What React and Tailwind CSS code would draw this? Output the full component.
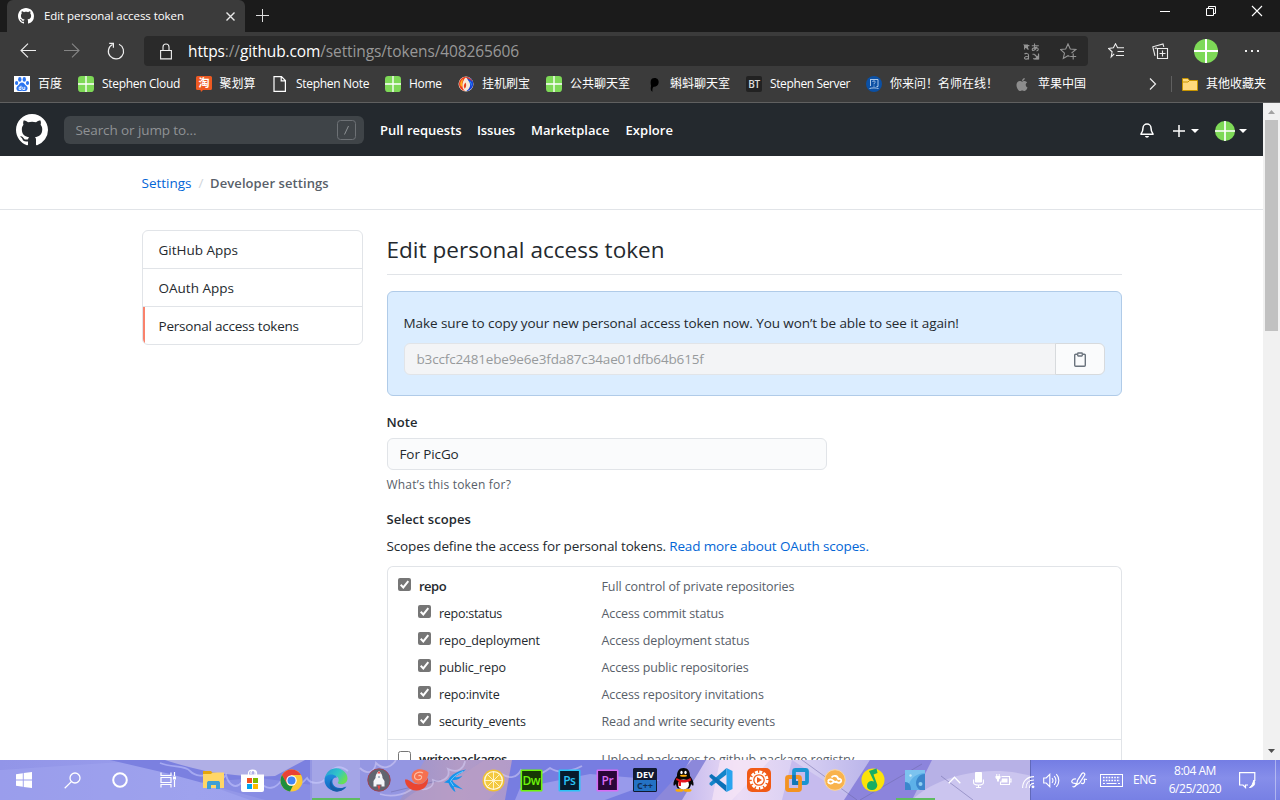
import React from "react";
import { FaApple } from "react-icons/fa";

const MARK =
  "M8 0C3.58 0 0 3.58 0 8c0 3.54 2.29 6.53 5.47 7.59.4.07.55-.17.55-.38 0-.19-.01-.82-.01-1.49-2.01.37-2.53-.49-2.69-.94-.09-.23-.48-.94-.82-1.13-.28-.15-.68-.52-.01-.53.63-.01 1.08.58 1.23.82.72 1.21 1.87.87 2.33.66.07-.52.28-.87.51-1.07-1.78-.2-3.64-.89-3.64-3.95 0-.87.31-1.59.82-2.15-.08-.2-.36-1.02.08-2.12 0 0 .67-.21 2.2.82.64-.18 1.32-.27 2-.27.68 0 1.36.09 2 .27 1.53-1.04 2.2-.82 2.2-.82.44 1.1.16 1.92.08 2.12.51.56.82 1.27.82 2.15 0 3.07-1.87 3.75-3.65 3.95.29.25.54.73.54 1.48 0 1.07-.01 1.93-.01 2.2 0 .21.15.46.55.38A8.013 8.013 0 0016 8c0-4.42-3.58-8-8-8z";

function Svg({ w = 16, h = w, vb, className = "", children }) {
  return (
    <svg width={w} height={h} viewBox={vb || `0 0 ${w} ${h}`} fill="none" className={`block shrink-0 ${className}`}>
      {children}
    </svg>
  );
}

function GitHubMark({ size }) {
  return (
    <Svg w={size} vb="0 0 16 16">
      <path d={MARK} fill="#fff" />
    </Svg>
  );
}

function GreenCross({ size, rx }) {
  return (
    <Svg w={size} vb="0 0 24 24">
      <rect width="24" height="24" rx={rx} fill="#7ed957" />
      <path d="M12 0v24M0 12h24" stroke="#fff" strokeWidth="2" />
    </Svg>
  );
}

/* ---------- browser chrome ---------- */

function TitleBar() {
  return (
    <div className="flex h-8 bg-[#1b1b1b] pl-[7px]">
      <div className="flex h-8 w-[238px] items-center rounded-t-[6px] bg-[#3b3b3b] pl-[11px]">
        <GitHubMark size={16} />
        <span className="ml-[10px] w-[140px] whitespace-nowrap text-[11.5px] leading-4 tracking-[-0.07px] text-white">
          Edit personal access token
        </span>
        <Svg w={9} className="ml-[42px]">
          <path d="M.5.5l8 8m0-8l-8 8" stroke="#e8e8e8" strokeWidth="1.4" />
        </Svg>
      </div>
      <Svg w={14} className="ml-[11px] mt-[9px]">
        <path d="M6.5 0v13M0 6.5h13" stroke="#ddd" />
      </Svg>
      <div className="ml-auto flex">
        <Svg w={12} className="mt-[6px] mr-[34px]">
          <path d="M1 5.5h10" stroke="#fff" />
        </Svg>
        <Svg w={12} className="mt-[5px] mr-[34px]">
          <path d="M1.5 3.5h7v7h-7zM3.5 3.5v-2h7v7h-2" stroke="#fff" />
        </Svg>
        <Svg w={12} className="mt-[5px] mr-[17px]">
          <path d="M1 1l10 10M11 1L1 11" stroke="#fff" strokeWidth="1.1" />
        </Svg>
      </div>
    </div>
  );
}

function Toolbar() {
  return (
    <div className="flex h-[38px] items-center bg-[#3b3b3b] pl-5">
      <Svg w={17} h={16}>
        <path d="M16 7.5H1M8 .7L1 7.5l7 6.8" stroke="#eee" strokeWidth="1.1" />
      </Svg>
      <Svg w={17} h={16} className="ml-[27px]">
        <path d="M0 7.5h15M8 .7l7 6.8-7 6.8" stroke="#858585" strokeWidth="1.1" />
      </Svg>
      <Svg w={18} h={18} className="ml-[26px]">
        <path d="M12 2.3A7.6 7.6 0 1 1 5.5 2.5M2.2 1.4h4.2v4.4" stroke="#eee" strokeWidth="1.2" />
      </Svg>
      <div className="ml-[19px] flex h-[30px] w-[944px] items-center rounded-[4px] bg-[#2a2a2a] pl-4">
        <Svg w={12} h={17}>
          <path d="M.6 7.5h10.8v8.4H.6zM3 7.5V4a3 3 0 0 1 6 0v3.5" stroke="#eee" strokeWidth="1.1" />
        </Svg>
        <span className="ml-4 whitespace-nowrap text-[15.5px] leading-5 tracking-[-0.12px] text-[#989898]">
          <span className="text-white">https</span>://<span className="text-white">github.com</span>/settings/tokens/408265606
        </span>
        <Svg w={17} h={17} className="ml-auto mr-[20px]">
          <g stroke="#949494" strokeWidth="1.1">
            <path d="M1.6 6.5V2.6h4.8M2 3l3.500 3.500" />
            <path d="M1.200 2h3.300v3.300z" fill="#949494" />
            <path d="M8.800 2.800h7M11.500.5c0 3 0 4.500.7 6.500M14 3.800c-.9 2.200-2.500 3.700-4.400 3.700-1.400-1.900 1.400-3.100 3.900-2.800 2.400.4 2.300 2.800 0 3.300" />
            <path d="M1.500 11c1-1 4-.8 4 1v4.500M5.500 13.200c-5-.2-4.800 3-2.400 2.900 1.400 0 2.400-1 2.400-1.800" />
            <path d="M9.500 11.200h2M15.500 10.500v5M10 15.800h5.500M11.500 11.500l4 4" />
            <path d="M15.600 12.500v3.400h-3.400z" fill="#949494" />
          </g>
        </Svg>
        <Svg w={17} h={17} className="mr-[11px]">
          <path d="M11.5 10.2l4.3-3.7-5.500-.5L8 .9 5.700 6l-5.200.5 4 3.600-1.200 5.300L8 12.700l1.600.9M13.200 10.500v6M10.200 13.500h6" stroke="#949494" strokeWidth="1.1" />
        </Svg>
      </div>
      <Svg w={17} h={16} className="ml-[20px]">
        <path d="M6.200 10.900l-3 2.900.9-5L.6 5.500l4.800-.7L7.500.8l2.100 4H16M9.500 8.500H16M8 12.500h8" stroke="#eee" strokeWidth="1.1" />
      </Svg>
      <Svg w={17} h={17} className="ml-[27px]">
        <path d="M5.500 5.500h10v10h-10zM10.500 7.500v6M7.500 10.500h6M3 12.900L.8 3.800 11 .9l.8 2.900M2.800 5.500l2-.6" stroke="#eee" strokeWidth="1.1" />
      </Svg>
      <div className="ml-[25px]">
        <GreenCross size={24} rx={12} />
      </div>
      <Svg w={16} h={4} className="ml-[26px]">
        <path d="M1 2h2M7 2h2M13 2h2" stroke="#eee" strokeWidth="2" />
      </Svg>
    </div>
  );
}

const PageIcon = (
  <Svg>
    <path d="M2 .6h7.5L13.400 4.500v10.900H2zM9.200.6v4.200h4.200" stroke="#fff" strokeWidth="1.2" />
  </Svg>
);
const BaiduIcon = (
  <Svg>
    <rect width="16" height="16" fill="#fff" />
    <g fill="#2b74f0">
      <ellipse cx="5.800" cy="3.400" rx="1.700" ry="2.300" />
      <ellipse cx="10.300" cy="3.400" rx="1.700" ry="2.300" />
      <ellipse cx="2.600" cy="7" rx="1.600" ry="2.100" />
      <ellipse cx="13.500" cy="7" rx="1.600" ry="2.100" />
      <path d="M8 6.500c2 0 2.800 2.200 4.500 3.500 2 1.800 1 4.800-1.200 5-1.300.2-2-.2-3.300-.2s-2 .4-3.300.2C2.500 14.800 1.500 11.800 3.500 10 5.200 8.700 6 6.500 8 6.500z" />
    </g>
    <path d="M7 9.700V13.500H5.200v-2.300H7M8.800 10.800v2.700h2v-2.700" stroke="#fff" strokeWidth=".9" />
  </Svg>
);
const TaoIcon = (
  <Svg>
    <path d="M1.500 0h13A1.500 1.500 0 0 1 16 1.500v11a1.500 1.500 0 0 1-1.500 1.500H7l-2 2-.5-2h-3A1.500 1.500 0 0 1 0 12.500v-11A1.500 1.500 0 0 1 1.500 0z" fill="#ee5a22" />
    <text x="8" y="11.300" textAnchor="middle" fontSize="11" fontWeight="700" fontFamily="Noto Sans CJK SC" fill="#fff">淘</text>
  </Svg>
);
const SwirlIcon = (
  <Svg>
    <circle cx="8" cy="8" r="7.500" fill="#f6e9d8" />
    <path d="M8 .8a7.200 7.200 0 0 0-1 14.300C3.500 12 3 7 8 .8z" fill="#ee3b1d" />
    <path d="M8.500 1c4.500.3 7 3.600 6.700 7.200-.3 3.800-3.200 6.600-6.700 6.900 3.500-2.600 4.500-6 2.800-9C10.500 4.500 9 3 8.500 1z" fill="#1741d8" />
    <path d="M6.500 1.200c3-.9 6.500.6 7.700 4.300C12 3 9 2.500 6.500 1.200z" fill="#e8401c" />
    <path d="M11 4.500c2.500 1.500 3.200 3.500 2.500 6-.5-2.500-1.200-4-2.500-6z" fill="#2ba5ff" />
    <path d="M7.500 6.500c1 2 1 4.500-.8 6.200-1.500-2.200-1-4.500.8-6.200z" fill="#e8401c" />
    <path d="M2.200 8c.2-2.500 1.500-4.500 3.300-5.300C4.300 4.800 3.800 8 4.500 11 3 10.500 2.200 9.500 2.200 8z" fill="#ffb11b" />
  </Svg>
);
const TadpoleIcon = (
  <Svg>
    <path d="M8.500 2c3 0 4.600 2.200 4.100 4.900-.5 2.600-2.600 4-4.900 3.800-1.300.6-1.400 2.800-1.200 5-2-.6-2-3.700-1.400-5.700C4.200 5.500 4.600 2 8.500 2z" fill="#000" />
  </Svg>
);
const BtIcon = (
  <div className="flex h-4 w-4 items-center justify-center rounded-[2px] bg-[#222] text-[10px] font-semibold leading-none tracking-[-0.3px] text-[#ddd]">BT</div>
);
const AskIcon = (
  <Svg>
    <circle cx="8" cy="8" r="8" fill="#0b50a4" />
    <path d="M4.500 4v6M4 3.500h8v7h-1.500M6.500 6c.3-1.500 3-1.300 2.700.2C9 7 8 7 8 8.300M8 9.600v1M3.500 12.500c3-.8 6-.8 9 0" stroke="#bcd4ef" strokeWidth=".9" />
  </Svg>
);
const Cross = <GreenCross size={16} rx={5} />;

const LATIN = "tracking-[-0.3px]";
const CJK = "tracking-normal";

const BOOKMARKS = [
  [BaiduIcon, "百度", "w-16", CJK],
  [Cross, "Stephen Cloud", "w-[117.5px]", LATIN],
  [TaoIcon, "聚划算", "w-[76.5px]", CJK],
  [PageIcon, "Stephen Note", "w-[113px]", LATIN],
  [Cross, "Home", "w-[73px]", LATIN],
  [SwirlIcon, "挂机刷宝", "w-[88px]", CJK],
  [Cross, "公共聊天室", "w-[100px]", CJK],
  [TadpoleIcon, "蝌蚪聊天室", "w-[100px]", CJK],
  [BtIcon, "Stephen Server", "w-[120px]", "tracking-[-0.38px]"],
  [AskIcon, "你来问！名师在线！", "w-[148px]", CJK],
  [<FaApple className="h-[15px] w-4 text-[#8d8d8d]" />, "苹果中国", "w-[72px]", CJK],
];

function BookmarkBar() {
  return (
    <div className="flex h-[33px] items-center border-b border-[#606060] bg-[#3b3b3b] pb-[4px] pl-[14px] text-xs leading-4 text-white">
      {BOOKMARKS.map(([icon, label, width, tracking]) => (
        <div key={label} className={`flex shrink-0 items-center gap-2 whitespace-nowrap ${width}`}>
          {icon}
          <span className={tracking}>{label}</span>
        </div>
      ))}
      <Svg w={8} h={12} className="ml-[63px]">
        <path d="M1 .5L6.500 6 1 11.500" stroke="#eee" strokeWidth="1.2" />
      </Svg>
      <div className="ml-[14px] h-4 w-px bg-[#606060]" />
      <Svg w={16} h={13} className="ml-[10px] mr-2">
        <path d="M.5.5h5.500l1.500 2h8v10H.5z" fill="#ffd97c" stroke="#c79400" />
        <path d="M1 4h5l1.500-1.500" stroke="#c79400" />
      </Svg>
      <span className="whitespace-nowrap">其他收藏夹</span>
    </div>
  );
}

/* ---------- page ---------- */

function Caret() {
  return (
    <Svg w={8} h={4}>
      <path d="M0 0h8L4 4z" fill="#fff" />
    </Svg>
  );
}

function SiteHeader() {
  return (
    <header className="flex h-[53px] items-center bg-[#24292e] pl-4 pt-px text-[13px] font-semibold text-white">
      <GitHubMark size={32} />
      <div className="ml-4 flex h-7 w-[300px] items-center rounded-md bg-[#3f4448] pl-[11.5px] pr-2 text-[13.5px] font-normal tracking-[-0.1px] text-[#8f9295]">
        <span>Search or jump to...</span>
        <Svg w={19} h={20} className="ml-auto">
          <rect x=".5" y=".5" width="18" height="19" rx="3" stroke="#6d7175" />
          <path d="M11.500 6l-4 8.500" stroke="#8d9194" />
        </Svg>
      </div>
      <nav className="ml-4 flex whitespace-nowrap pt-[2px]">
        <span className="w-[97px]">Pull requests</span>
        <span className="w-[54px] tracking-[-0.1px]">Issues</span>
        <span className="w-[94.5px]">Marketplace</span>
        <span className="w-[48px] tracking-[0.05px]">Explore</span>
      </nav>
      <Svg w={16} h={16} className="ml-auto">
        <path d="M4 6a4 4 0 0 1 8 0c0 2.900.5 3.900 1.900 5.700v.6H2.100v-.6C3.500 9.900 4 8.900 4 6z" stroke="#fff" strokeWidth="1.5" />
        <path d="M6 14h4c-.4 2.200-3.600 2.200-4 0z" fill="#fff" />
      </Svg>
      <Svg w={12} className="ml-[18px] mt-[2px]">
        <path d="M6 0v12M0 6h12" stroke="#fff" strokeWidth="1.5" />
      </Svg>
      <div className="ml-[6px] mt-[2px]"><Caret /></div>
      <div className="ml-4 mt-px"><GreenCross size={20} rx={12} /></div>
      <div className="ml-1 mr-4 mt-px"><Caret /></div>
    </header>
  );
}

function Checkbox({ checked }) {
  return (
    <Svg w={13}>
      {checked ? (
        <>
          <rect width="13" height="13" rx="2" fill="#767676" />
          <path d="M2.700 6.800l2.600 2.600 5-6.200" stroke="#fff" strokeWidth="2" />
        </>
      ) : (
        <rect x=".5" y=".5" width="12" height="12" rx="2" fill="#fff" stroke="#767676" />
      )}
    </Svg>
  );
}

const SCOPES = [
  ["repo", "Full control of private repositories", "tracking-[-0.5px]", "tracking-[-0.11px]"],
  ["repo:status", "Access commit status", "tracking-[-0.27px]", "tracking-[-0.13px]"],
  ["repo_deployment", "Access deployment status", "tracking-[-0.12px]", "tracking-[-0.12px]"],
  ["public_repo", "Access public repositories", "tracking-[-0.1px]", "tracking-[-0.12px]"],
  ["repo:invite", "Access repository invitations", "tracking-[-0.16px]", "tracking-[-0.11px]"],
  ["security_events", "Read and write security events", "tracking-[-0.18px]", "tracking-[-0.15px]"],
];

function ScopeRow({ name, desc, nameTracking, descTracking, child, checked }) {
  return (
    <div className="flex h-[27px] items-center whitespace-nowrap pl-[10.5px]">
      <div className={`flex w-[203.5px] items-center gap-2 ${child ? "pl-5" : ""}`}>
        <div className="-mt-[5px]"><Checkbox checked={checked} /></div>
        <span className={`${child ? "pt-[2px] text-[12.5px]" : "text-[13px] font-semibold"} text-[#24292e] ${nameTracking}`}>{name}</span>
      </div>
      <span className={`pt-[2px] text-[12.5px] text-[#586069] ${descTracking}`}>{desc}</span>
    </div>
  );
}

function Sidebar() {
  const item = "flex h-[38px] items-center border-b border-[#e1e4e8] pl-4 pt-[2px]";
  return (
    <nav className="mt-5 h-[115px] w-[221px] shrink-0 overflow-hidden rounded-md border border-[#e1e4e8] text-[13.5px] text-[#24292e]">
      <div className={item}>GitHub Apps</div>
      <div className={item}>OAuth Apps</div>
      <div className="flex h-[37px] items-center border-l-2 border-[#f9826c] pl-[14px] pt-[2px] tracking-[-0.22px]">Personal access tokens</div>
    </nav>
  );
}

function TokenForm() {
  return (
    <main className="ml-6 w-[735px] text-[#24292e]">
      <h1 className="flex h-[65px] items-center border-b border-[#e1e4e8] pt-[16px] text-[22.5px] tracking-[0.03px]">
        Edit personal access token
      </h1>
      <div className="mt-4 h-[105px] rounded-md border border-[#b0cbe8] bg-[#dbedff] px-4 pt-[21px]">
        <p className="text-[13.5px] leading-5 tracking-[-0.08px]">
          Make sure to copy your new personal access token now. You won’t be able to see it again!
        </p>
        <div className="mt-[10px] flex h-8">
          <div className="flex w-[652px] items-center rounded-l-md border border-[#e1e4e8] bg-[#f3f4f6] pl-3 text-[13.5px] tracking-[-0.15px] text-[#979a9c]">
            b3ccfc2481ebe9e6e3fda87c34ae01dfb64b615f
          </div>
          <div className="-ml-px flex w-[50px] items-center justify-center rounded-r-md border border-[#d7dadd] bg-[#fafbfc]">
            <Svg w={12} h={15}>
              <path d="M3.300 2.200H1.700a1 1 0 0 0-1 1v10a1 1 0 0 0 1 1h8.600a1 1 0 0 0 1-1v-10a1 1 0 0 0-1-1H8.700" stroke="#6a737d" strokeWidth="1.4" />
              <rect x="3.700" y="1" width="4.600" height="3" rx=".5" stroke="#6a737d" strokeWidth="1.3" />
            </Svg>
          </div>
        </div>
      </div>
      <div className="mt-4 text-[13px] font-semibold leading-5 tracking-[0.06px]">Note</div>
      <div className="mt-[6px] flex h-8 w-[440px] items-center rounded-md border border-[#e1e4e8] bg-[#fafbfc] pl-3 text-[13.5px] tracking-[-0.1px]">For PicGo</div>
      <div className="mt-[5px] text-xs leading-5 tracking-[0.2px] text-[#586069]">What’s this token for?</div>
      <div className="mt-[14px] text-[13px] font-semibold leading-5 tracking-[0.08px]">Select scopes</div>
      <p className="mt-[7px] whitespace-nowrap text-[13.5px] leading-5 tracking-[-0.14px]">
        Scopes define the access for personal tokens. <span className="text-[#0366d6]">Read more about OAuth scopes.</span>
      </p>
      <div className="mt-[10px] rounded-t-md border border-b-0 border-[#e1e4e8]">
        <div className="h-[173px] border-b border-[#e1e4e8] pt-[6px]">
          {SCOPES.map(([name, desc, nt, dt], i) => (
            <ScopeRow key={name} name={name} desc={desc} nameTracking={nt} descTracking={dt} child={i > 0} checked />
          ))}
        </div>
        <div className="h-[60px] pt-[6px]">
          <ScopeRow name="write:packages" desc="Upload packages to github package registry" nameTracking="tracking-[-0.44px]" descTracking="tracking-[-0.01px]" />
        </div>
      </div>
    </main>
  );
}

function Scrollbar() {
  return (
    <div className="flex w-[17px] shrink-0 flex-col items-center justify-between bg-[#f1f1f1]">
      <div className="flex flex-col items-center">
        <Svg w={7} h={4} className="mb-[6px] mt-[7px]"><path d="M0 4L3.500 0 7 4z" fill="#a3a3a3" /></Svg>
        <div className="h-[211px] w-[13px] bg-[#c1c1c1]" />
      </div>
      <Svg w={7} h={4} className="mb-[7px]"><path d="M0 0h7L3.500 4z" fill="#505050" /></Svg>
    </div>
  );
}

/* ---------- taskbar ---------- */

function Wallpaper() {
  return (
    <svg className="absolute inset-0" width="1280" height="40" fill="none">
      <defs>
        <linearGradient id="wl" x1="0" x2="1"><stop stopColor="#9295e8" /><stop offset=".15" stopColor="#9a9eec" /><stop offset="1" stopColor="#8187e3" /></linearGradient>
        <linearGradient id="wp" x1="0" x2="1"><stop stopColor="#9c93cc" /><stop offset=".5" stopColor="#b29bc6" /><stop offset="1" stopColor="#a897d0" /></linearGradient>
        <linearGradient id="wm" x1="0" x2="1"><stop stopColor="#b9b0ec" /><stop offset=".35" stopColor="#ecdcf5" /><stop offset=".7" stopColor="#d5cdf2" /><stop offset="1" stopColor="#bab5ea" /></linearGradient>
        <linearGradient id="wr" x1="0" x2="0" y1="0" y2="1"><stop stopColor="#747de4" /><stop offset=".45" stopColor="#868eea" /><stop offset="1" stopColor="#7780e4" /></linearGradient>
      </defs>
      <rect width="1280" height="40" fill="url(#wl)" />
      <path d="M0 10L120 2l90 12 60 26H0z" fill="#a2a6ef" opacity=".5" />
      <path d="M110 0h280v40H265L170 14z" fill="#7b80e0" />
      <path d="M165 0h140l-30 16c-35 2-75-4-110-16z" fill="#b0afe6" />
      <path d="M200 22l60-4 60 8v14h-70z" fill="#8f93e6" opacity=".7" />
      <path d="M310 0h120v40H310z" fill="#9496e2" />
      <path d="M425 0h92l-5 40H400z" fill="url(#wp)" />
      <path d="M404 40c16-13 36-22 60-26l20-14h30l-6 22-20 18z" fill="#ba9ec4" opacity=".6" />
      <path d="M512 0h180l-22 40H505z" fill="#777de1" />
      <path d="M520 28l70-14 70 6-55 20h-90z" fill="#989aeb" />
      <path d="M690 0h180l-20 40H668z" fill="url(#wm)" />
      <path d="M655 40L692 0h14l-24 40z" fill="#8c88da" />
      <path d="M720 0h50l-38 40h-20z" fill="#f7e6f6" opacity=".7" />
      <path d="M792 0l62 40h-72z" fill="#c6bbee" />
      <path d="M870 0h66l-20 40h-72z" fill="#8c84dc" />
      <path d="M932 0h100v40H912z" fill="#b7b1e6" />
      <path d="M912 40c20-20 68-38 120-24v24z" fill="#cbc5ef" />
      <path d="M802 0l55 40M860 40l62-36M941 16l32 24M441 20l-50 12" stroke="#6e69a8" opacity=".5" />
      <path d="M1030 0h250v40h-250z" fill="url(#wr)" />
      <path d="M1030.5 0v40" stroke="#6169ba" />
      <path d="M160 3c12 5 25 2 30 8 5 5 15 7 20 1 3 10 12 9 16 3 2 8 9 16 16 7 4 10 13 8 17-1 8 11 17 7 22 0 9 12 19 5 26-3 3 6 14 7 19 0 5-11 13-14 22-7" stroke="#c9cbff" strokeWidth="1.8" opacity=".55" />
      <path d="M360 8c8 8 15 3 16-5 7 7 15 5 20-3M380 34c13 4 30 0 35-9 5 8 20 4 18-5 9 4 18-3 15-11 10 5 16-1 17-8M502 14c7 5 15 4 19-4 8 9 20 5 29-2 10 7 25 2 32-2" stroke="#d5cff5" strokeWidth="1.8" opacity=".55" />
    </svg>
  );
}

function AdobeTile({ label, color, bg }) {
  return (
    <Svg w={23}>
      <rect x="1.300" y="1.300" width="20.400" height="20.400" rx=".5" fill={bg} stroke={color} strokeWidth="1.6" />
      <text x="11.300" y="15.500" textAnchor="middle" fontSize="12" fontFamily="Open Sans" fontWeight="600" letterSpacing="-.5" fill={color}>{label}</text>
    </Svg>
  );
}

const APPS = [
  ["start", "w-12", <Svg w={16}><path d="M0 2.200L6.800 1.200V7.500H0zM7.700 1L16 0v7.500H7.700zM0 8.500h6.800v6.300L0 13.800zM7.700 8.500H16V16l-8.300-1.100z" fill="#fff" /></Svg>],
  ["search", "w-12", <Svg w={17}><circle cx="11" cy="6" r="5" stroke="#fff" strokeWidth="1.3" /><path d="M7.400 9.600L.7 16.200" stroke="#fff" strokeWidth="1.3" /></Svg>],
  ["cortana", "w-12", <Svg w={16}><circle cx="8" cy="8" r="6.800" stroke="#fff" strokeWidth="2" /></Svg>],
  ["tasks", "w-12", <Svg w={17} h={16}><path d="M1 .5v3h10v-3M1 15.500v-3h10v3M1 5.500h10v5H1zM14.500 0v4M14.500 8v7" stroke="#fff" strokeWidth="1.2" /><path d="M13 4.500h3v3h-3z" fill="#fff" /></Svg>],
  ["explorer", "w-[43px]", <Svg w={21} h={18}><path d="M0 0h8l1.500 2H20v15H0z" fill="#e5a50e" /><path d="M0 3h8l1.500-1.500H21V17H0z" fill="#ffd667" /><path d="M4 18v-6.500L5 10h11l1 1.500V18h-4v-4H8v4z" fill="#3f9fd6" /></Svg>],
  ["store", "w-[34px]", <Svg w={23}><path d="M7.500 6V4c0-4 8-4 8 0v2M10 5V3c1-2 3-2 4 0v3" stroke="#fff" strokeWidth="1.2" /><path d="M0 5.500h23V21a2 2 0 0 1-2 2H2a2 2 0 0 1-2-2z" fill="#fff" /><path d="M6 9h5v5H6z" fill="#f25022" /><path d="M12 9h5v5h-5z" fill="#7fba00" /><path d="M6 15h5v5H6z" fill="#00a4ef" /><path d="M12 15h5v5h-5z" fill="#ffb900" /></Svg>],
  ["chrome", "w-[43px]", <Svg w={23} className="ml-0.5"><circle cx="11.500" cy="11.500" r="11" fill="#fcc934" /><path d="M2 6a11 11 0 0 1 19 0h-9.500l-5 8.500z" fill="#e94235" /><path d="M2 6l4.700 8.300c1.500 2.600 4 3 6.300 2.200l-3 5.900A11 11 0 0 1 2 6z" fill="#1e8e3e" /><circle cx="11.500" cy="11.500" r="5.200" fill="#fff" /><circle cx="11.500" cy="11.500" r="4" fill="#4285f4" /></Svg>],
  ["edge", "w-12", <Svg w={24}><defs><linearGradient id="e1" x1="0" y1="0" x2="1" y2=".5"><stop stopColor="#2596d8" /><stop offset=".6" stopColor="#31c6c8" /><stop offset="1" stopColor="#68df56" /></linearGradient><linearGradient id="e2" x1="0" y1="0" x2="0" y2="1"><stop stopColor="#1f8ede" /><stop offset="1" stopColor="#1066c0" /></linearGradient></defs><path d="M.5 11C2 4 7 0 12.500.3c6 .3 11 4.700 11 10.200 0 4-3.500 6-7 5.800-2-.1-3.300-1-2.500-2 1.700-2.300.5-6.300-4-6.600C6 7.500 2.500 8.500.5 11z" fill="url(#e1)" /><path d="M.5 12c0-4 4-6 8-5.500 2 .3 4 1.500 4.500 3-4-.5-5.500 3-4 6.500 1.700 4 7.500 5.500 13.500 2.500C19 26 1 25 .5 12z" fill="url(#e2)" /><path d="M8 11c-2 5 2 10.500 8.500 9.500 2-.3 4-1.300 5-2-3 5-8 6-12 4.500C5 21 4.500 14 8 11z" fill="#175da8" /></Svg>],
  ["rocket", "w-[38px]", <Svg w={24}><circle cx="12" cy="12" r="11.200" fill="#60656f" stroke="#9e4457" /><path d="M12 3c2.500 2 3.500 4 3.500 7l2 3v5.500h-3V16.500h-5v2h-3V13l2-3c0-3 1-5 3.500-7z" fill="#f4f6f8" /><path d="M12 3l1.800 2.500h-3.600zM10.300 17.500h3.400L12 22.500z" fill="#ea4a45" /><circle cx="12" cy="9" r="1" fill="#9aa7b8" /></Svg>],
  ["spiral", "w-[38px]", <Svg w={24} h={22}><path d="M23.500 3.500C18-1 9-1 7 5.500c-1.500 5 2 9.500 7 9.500 6 0 9-6 9.500-11.500z" fill="#f6704f" /><path d="M0 10.500c4-.5 6 2.500 9 4 5 2 11 .5 14-6 1 8-5 13.500-12 13C4 21 0 16.500 0 10.500z" fill="#ea4531" /><path d="M18 4c-4-2-8.500 0-8.500 3.500 0 3.500 5.500 4.500 7 1.500.8-2-1.500-3.500-3-2" stroke="#fcc0a6" strokeWidth="1.1" /></Svg>],
  ["fish", "w-[38px]", <Svg w={22} h={23}><path d="M22 .5C13 2 7 6 4.500 10.500L0 13.500l4.500.5c2 5 5 8 7 9l-2-5.500 9.500 3-7.500-5.500c-2-1.500-3-2.500-3-4 5 .5 8-1.500 10-4.500-3 1.500-5 2-7.500 1.500 3-2.500 7-4 11-7.500z" fill="#1493ec" /><path d="M19 2.500C12 5.500 8 9 6.500 12.500l3 4.500" stroke="#8fdcff" strokeWidth=".8" /></Svg>],
  ["lemon", "w-[38px]", <Svg w={23}><circle cx="11.500" cy="11.500" r="11" fill="#f0c130" /><circle cx="11.500" cy="11.500" r="9.600" fill="#fff6d5" /><circle cx="11.500" cy="11.500" r="8.200" fill="#f3c93f" /><path d="M11.500 3v17M3 11.500h17M5.500 5.500l12 12M17.500 5.500l-12 12" stroke="#fff3c4" strokeWidth="1" /></Svg>],
  ["dw", "w-[38px]", <AdobeTile label="Dw" color="#6df50a" bg="#173a05" />],
  ["ps", "w-[38px]", <AdobeTile label="Ps" color="#2ac3f5" bg="#071b2c" />],
  ["pr", "w-[38px]", <AdobeTile label="Pr" color="#d86cf4" bg="#2a0638" />],
  ["dev", "w-[38px]", <div className="flex h-6 w-6 flex-col items-center rounded-[1px] border border-[#111a32] bg-[#2472c4] font-bold leading-none"><div className="flex h-[11px] w-full items-center justify-center bg-[#111a32] text-[9px] leading-[11px] text-white">DEV</div><div className="text-[9px] leading-[11px] text-[#122d55]">C++</div></div>],
  ["qq", "w-[38px]", <Svg w={21} h={24}><path d="M10.500 0c4.500 0 6.500 3.500 6.500 8 2 2.500 4 6 3.500 9-.5 1.500-1.500 0-2.500-1-.3 2-1 3.500-2 4.500H5C4 19.500 3.300 18 3 16c-1 1-2 2.500-2.500 1C0 14 2 10.500 4 8c0-4.500 2-8 6.500-8z" fill="#080808" /><ellipse cx="10.500" cy="16.500" rx="5.500" ry="5" fill="#fff" /><ellipse cx="8.500" cy="4.500" rx="1.200" ry="1.700" fill="#fff" /><ellipse cx="12.500" cy="4.500" rx="1.200" ry="1.700" fill="#fff" /><ellipse cx="10.500" cy="7.800" rx="3.500" ry="1" fill="#faab07" /><path d="M3.500 10c4 2.500 10 2.500 14 0l.5 2.500c-3.500 2-7 2.300-10 1.800V18H5.500v-5L3 12z" fill="#e5141c" /><ellipse cx="6.500" cy="22.300" rx="4" ry="1.500" fill="#faab07" /><ellipse cx="14.500" cy="22.300" rx="4" ry="1.500" fill="#faab07" /></Svg>],
  ["code", "w-[38px]", <Svg w={24}><path d="M17.500 6.500L2.500 18 .5 16.500V15L17.500 0z" fill="#1485ca" /><path d="M17.500 17.500L2.500 6 .5 7.500V9l17 15z" fill="#0c70b8" /><path d="M17.500 0L23.500 3v18l-6 3z" fill="#2aa4ee" /></Svg>],
  ["sun", "w-[38px]", <Svg w={24}><rect width="24" height="24" rx="5" fill="#f15a16" /><circle cx="12" cy="12" r="7.300" fill="#fff" /><circle cx="12" cy="12" r="8.200" stroke="#fff" strokeWidth="2.6" strokeDasharray="3 1.294" /><circle cx="12" cy="12" r="5.200" stroke="#f15a16" strokeWidth="1.3" /><path d="M10 9l5 3-5 3z" fill="#f15a16" /></Svg>],
  ["vm", "w-[38px]", <Svg w={24}><rect x="9" y="2" width="13" height="13" rx="1.500" stroke="#1994d1" strokeWidth="3.8" /><rect x="2" y="9" width="13" height="13" rx="1.500" stroke="#f39322" strokeWidth="3.8" /><path d="M9 7.100v7.900h4.100" stroke="#1377b8" strokeWidth="3.8" /></Svg>],
  ["cloud", "w-[38px]", <Svg w={22}><circle cx="11" cy="11" r="10.300" fill="#f9b34d" stroke="#fbd69d" /><path d="M4 12.500c.5-2.500 3.500-2.500 5-.8 1.500 1.800 3.500 1.500 4 0M7.500 8.500c2-2.500 6-2 6.500 1M13.500 10.500c2-1.500 4-.2 3.700 1.500-.5 2-3.200 2.300-5.400.8M4 12.800c.8 2.500 4.200 2.200 5.500.2" stroke="#fff" strokeWidth="1.9" /></Svg>],
  ["music", "w-[38px]", <Svg w={24}><circle cx="12" cy="12" r="11.500" fill="#fbe20a" /><path d="M15.500.5L8 3l5 10.500c-3-1.500-7 0-7 4.200 0 6 10.500 6 10.300-1L12.500 6.500l4-1.500z" fill="#17ae63" /></Svg>],
  ["planets", "w-[46px]", <Svg w={20}><rect width="20" height="20" rx="1" fill="#5db1e8" /><path d="M0 0h20v3C12 3 6 8 4 14H0z" fill="#7cc3ef" /><path d="M0 12c4 0 6 3 6 8H0z" fill="#3a86cc" /><path d="M20 4c-6 0-9 5-9 9 0 3 1.500 5.500 4 7h5z" fill="#3a86cc" /><circle cx="5.500" cy="5.500" r="1.200" fill="#c9ecfb" /><circle cx="15.500" cy="14" r="2" fill="#8fd0f3" /></Svg>],
];

function Taskbar() {
  return (
    <div className="relative flex h-10 shrink-0 overflow-hidden text-white">
      <Wallpaper />
      <div className="relative flex">
        {APPS.map(([id, width, icon]) => (
          <div key={id} className={`flex h-10 items-center justify-center ${width} ${id === "edge" ? "border-b-2 border-[#5fbc61] bg-white/15 pt-0.5" : ""}`}>
            {id === "planets" ? (
              <div className="flex h-10 w-[39px] items-center justify-center border-b-2 border-[#5fbc61] pt-0.5">{icon}</div>
            ) : icon}
          </div>
        ))}
      </div>
      <div className="relative flex flex-1 items-center pl-[10px]">
        <Svg w={13} h={8}><path d="M.7 7.300L6.500 1.300l5.800 6" stroke="#fff" strokeWidth="1.3" /></Svg>
        <Svg w={11} h={16} className="ml-[12px]"><rect x="2" width="7" height="10.500" rx=".8" fill="#fff" /><path d="M.6 7.500v3.200c0 3 9.800 3 9.800 0V7.500M5.500 13v2.500M3 15.500h5" stroke="#fff" strokeWidth="1.1" /></Svg>
        <Svg w={17} h={14} className="ml-[11px]"><path d="M6.500 3.500h8v8h-9v-3M14.500 6h1.500v3h-1.500" stroke="#fff" strokeWidth="1.1" /><path d="M7 5.500h5.500v4H6zM.5 3h5v2L4 6.500v2H2v-2L.5 5z" fill="#fff" /><path d="M1.800 1v2M4.200 1v2" stroke="#fff" /></Svg>
        <Svg w={13} h={14} className="ml-[10px] mt-[4px]"><path d="M.6 13C.6 6 5.500 1.600 12 1.600M4 13c0-4.800 3-8 8-8M7.500 13c0-2.800 1.700-4.600 4.500-4.600" stroke="#fff" strokeWidth="1.1" /><circle cx="11" cy="11.800" r="1.400" fill="#fff" /></Svg>
        <Svg w={17} h={15} className="ml-[8px]"><path d="M.7 5h2.500l3.600-3.700v12.400L3.200 10H.7zM9 5.200c1.300 1.300 1.300 3.500 0 4.700M11.200 3.200c2.300 2.500 2.300 6.200 0 8.600M13.300 1.200c3.400 3.600 3.400 9 0 12.600" stroke="#fff" strokeWidth="1.1" /></Svg>
        <Svg w={17} h={16} className="ml-[11px]"><path d="M5 7c-4-.5-5.500 3-3 4 2 .8 4 0 3 2s-2.500 2-3.500 1.500M5.500 13l1-4.500L11 1.500c1.500-1.500 3.500 0 2.500 1.800L8.500 11zM10 11c2.500 1.500 4.500-.5 3-4M13 7l3 .5" stroke="#fff" strokeWidth="1.2" /></Svg>
        <Svg w={23} h={13} className="ml-[12px]"><rect x=".5" y=".5" width="22" height="12" stroke="#fff" /><path d="M3 3.500h17M3 6.500h17" stroke="#fff" strokeWidth="1.3" strokeDasharray="1.600 1.200" /><path d="M3 9.500h2M6.500 9.500h10M18 9.500h2" stroke="#fff" strokeWidth="1.2" /></Svg>
        <span className="ml-[10px] w-[24px] text-xs tracking-[-0.48px]">ENG</span>
        <div className="ml-[10px] w-[56px] text-center text-xs leading-[18px] tracking-[-0.48px]">
          <div>8:04 AM</div>
          <div>6/25/2020</div>
        </div>
        <Svg w={17} h={17} className="ml-[16px]"><path d="M9 13H6.500v2.500L4 13H.6V.6h15.200V9" stroke="#fff" strokeWidth="1.2" /><path d="M15 8c1.500 3.500.5 7-4.500 7.500 3-1.500 3-4.500 4.500-7.500z" fill="#fff" stroke="#fff" /></Svg>
      </div>
      <div className="relative mr-1 h-10 w-px bg-white/40" />
    </div>
  );
}

export default function App() {
  return (
    <div className="flex h-[800px] w-[1280px] flex-col overflow-hidden bg-white font-['Open_Sans','Noto_Sans_CJK_SC',sans-serif]">
      <TitleBar />
      <Toolbar />
      <BookmarkBar />
      <div className="flex h-[657px] shrink-0 overflow-hidden">
        <div className="w-[1263px] overflow-hidden bg-white">
          <SiteHeader />
          <div className="flex h-[54px] items-center border-b border-[#e1e4e8] pl-[141.5px] pt-[2px] text-[13px]">
            <span className="text-[13.5px] text-[#0366d6]">Settings</span>
            <span className="ml-[7px] w-[11.5px] text-[13.5px] text-[#d1d5da]">/</span>
            <span className="font-semibold tracking-[0.09px] text-[#586069]">Developer settings</span>
          </div>
          <div className="mx-auto flex w-[980px]">
            <Sidebar />
            <TokenForm />
          </div>
        </div>
        <Scrollbar />
      </div>
      <Taskbar />
    </div>
  );
}
